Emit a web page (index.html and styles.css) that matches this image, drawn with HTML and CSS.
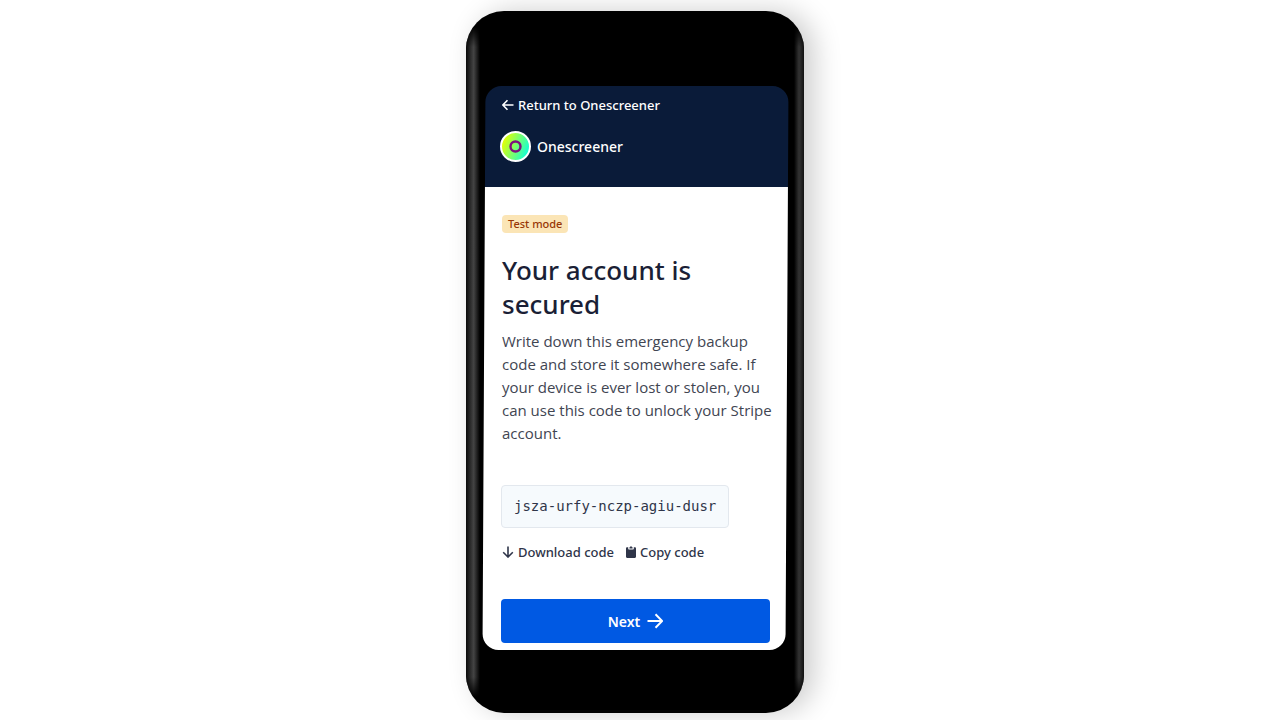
FILE: index.html
```html
<!DOCTYPE html>
<html lang="en">
<head>
  <meta charset="UTF-8" />
  <meta name="viewport" content="width=device-width, initial-scale=1.0" />
  <title>Your account is secured</title>
  <link rel="stylesheet" href="styles.css">
</head>
<body>
  <div class="phone">
    <div class="screen">
      <header>
        <a class="back" href="#">
          <svg width="12" height="12" viewBox="0 0 12 12"><path d="M11.5 6H1M5.5 1.2L.8 6l4.7 4.8" /></svg>
          Return to Onescreener
        </a>
        <div class="brand">
          <svg width="31" height="31" viewBox="0 0 31 31">
            <defs>
              <linearGradient id="logo" x1="0" y1="0.3" x2="1" y2="0.7">
                <stop offset="0.05" stop-color="#e6ff00" />
                <stop offset="0.95" stop-color="#0fffd8" />
              </linearGradient>
            </defs>
            <circle cx="15.5" cy="15.5" r="14.5" fill="url(#logo)" stroke="#fff" stroke-width="2" />
            <circle cx="15.5" cy="15.5" r="5" fill="none" stroke="#7d0f7d" stroke-width="2.4" />
          </svg>
          <span>Onescreener</span>
        </div>
      </header>

      <main>
        <span class="badge">Test mode</span>
        <h1>Your account is secured</h1>
        <p>Write down this emergency backup code and store it somewhere safe. If your device is ever lost or stolen, you can use this code to unlock your Stripe account.</p>

        <code>jsza-urfy-nczp-agiu-dusr</code>

        <div class="actions">
          <button type="button" class="link">
            <svg width="12" height="12" viewBox="0 0 12 12"><path d="M6 .5V11M1.2 6.3L6 11l4.8-4.7" /></svg>
            Download code
          </button>
          <button type="button" class="link">
            <svg class="clip" width="10" height="12" viewBox="0 0 10 12">
              <path d="M1.2 1.2h1v1.4c0 .6.4 1 1 1h3.6c.6 0 1-.4 1-1V1.2h1c.7 0 1.2.5 1.2 1.2v8.4c0 .7-.5 1.2-1.2 1.2H1.2C.5 12 0 11.5 0 10.800V2.4c0-.7.5-1.2 1.2-1.2z" />
              <path d="M3.4 1.2h.7a.9.9 0 0 1 1.800 0h.7v1.300H3.4z" />
            </svg>
            Copy code
          </button>
        </div>

        <button type="button" class="next">
          Next
          <svg width="16" height="16" viewBox="0 0 16 16"><path d="M.5 8H15M8.5 1.3L15.2 8l-6.7 6.7" /></svg>
        </button>
      </main>
    </div>
  </div>
</body>
</html>
```
FILE: styles.css
```css
:root {
  --navy: #0a1b39;
  --text: #1a1f36;
  --muted: #414552;
  --primary: #0059e3;
}

* {
  box-sizing: border-box;
}

body {
  margin: 0;
  font-family: 'Noto Sans', 'Open Sans', sans-serif;
  background: #fff;
  color: var(--text);
}

.phone {
  position: relative;
  width: 100%;
  max-width: 338px;
  margin: 11px auto 7px;
  padding: 75px 17px 63px 18px;
  border-radius: 38px;
  overflow: hidden;
  background: #000;
  box-shadow: 10px 0 28px rgba(0, 0, 0, 0.2);
}

/* light on the metal edges */
.phone::before,
.phone::after {
  content: '';
  position: absolute;
  top: 16px;
  bottom: 16px;
  width: 14px;
  background: linear-gradient(to right, #0a0a0a, #444 55%, #000);
  mask-image: linear-gradient(transparent, #000 20px, #000 calc(100% - 20px), transparent);
}

.phone::before {
  left: 0;
}

.phone::after {
  right: 0;
  width: 10px;
  background: linear-gradient(to right, #000, #333 50%, #111);
}

.screen {
  position: relative;
}

.screen::before {
  content: '';
  position: absolute;
  inset: 0;
  border-radius: 16px;
  background: linear-gradient(var(--navy) 101px, #fff 101px);
  transform: skewX(-0.3deg);
}

header {
  position: relative;
  height: 101px;
  padding: 9px 16px;
  color: #fff;
}

svg {
  flex: none;
  fill: none;
  stroke: currentColor;
  stroke-width: 1.6;
}

.back {
  display: flex;
  align-items: center;
  gap: 4px;
  margin-bottom: 16px;
  padding-left: 2px;
  color: #fff;
  font-size: 13px;
  line-height: 20px;
  font-weight: 500;
  text-decoration: none;
}

.brand {
  display: flex;
  align-items: center;
  gap: 6px;
  font-size: 14px;
  font-weight: 500;
}

main {
  position: relative;
  display: flex;
  flex-direction: column;
  align-items: flex-start;
  padding: 28px 17px 7px;
}

.badge {
  margin-left: 1px;
  padding: 0 6px;
  border-radius: 4px;
  background: #fbe5b6;
  color: #983705;
  font-size: 11px;
  line-height: 18px;
  font-weight: 500;
}

h1 {
  margin: 20px 0 9px 1px;
  font-size: 26px;
  line-height: 34px;
  font-weight: 500;
}

p {
  margin: 0 -8px 40px 1px;
  color: var(--muted);
  font-family: 'Open Sans', sans-serif;
  font-size: 15px;
  line-height: 23px;
}

code {
  padding: 0 12px;
  border: 1px solid #e3e8ee;
  border-radius: 4px;
  background: #f6fafd;
  color: #2f3549;
  font-family: 'DejaVu Sans Mono', monospace;
  font-size: 14px;
  line-height: 41px;
}

button {
  display: flex;
  align-items: center;
  border: none;
  font-family: inherit;
  font-weight: 500;
  cursor: pointer;
}

.actions {
  display: flex;
  gap: 11px;
  margin: 14px 0 37px;
}

.link {
  gap: 4px;
  padding: 0 0 0 1px;
  background: none;
  color: #2f3549;
  font-size: 13px;
  line-height: 20px;
}

.clip {
  fill: currentColor;
  stroke: none;
}

.next {
  justify-content: center;
  gap: 7px;
  width: 100%;
  height: 44px;
  border-radius: 4px;
  background: var(--primary);
  color: #fff;
  font-size: 14px;
  font-weight: 600;
}

.next svg {
  stroke-width: 2;
}
```
